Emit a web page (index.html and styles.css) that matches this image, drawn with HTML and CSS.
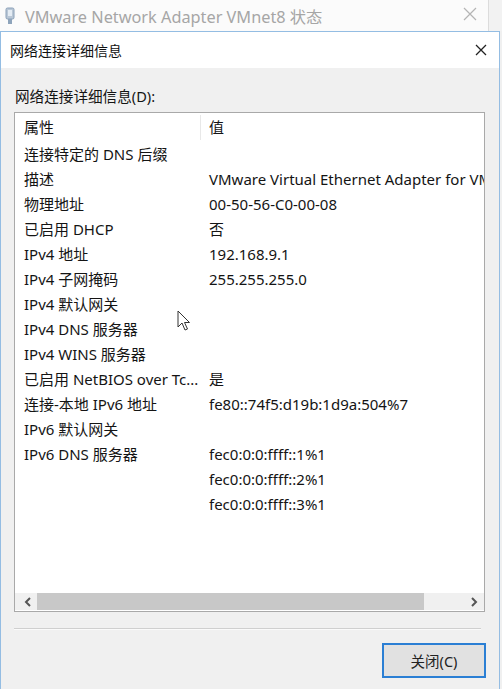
FILE: index.html
```html
<!DOCTYPE html>
<html lang="zh-CN">
<head>
<meta charset="utf-8">
<title>网络连接详细信息</title>
<link rel="stylesheet" href="styles.css">
</head>
<body>
<div class="bgbar">
  <div class="bgtitle">
    <svg class="bgicon" width="10" height="18" viewBox="0 0 10 18">
      <rect x="1" y="1" width="8" height="11" rx="1.5" fill="#b9c7d6" stroke="#8aa0b8" stroke-width="1"/>
      <rect x="3" y="3" width="4" height="6" fill="#e4ecf4"/>
      <rect x="3" y="12" width="4" height="5" fill="#8ea4bb"/>
    </svg>
    <span>VMware Network Adapter VMnet8 状态</span>
  </div>
  <svg class="bgclose" width="14" height="14" viewBox="0 0 14 14"><path d="M1 1L13 13M13 1L1 13" stroke="#b4b4b4" stroke-width="1.2" fill="none"/></svg>
  <div class="bgedge"></div>
</div>
<div class="dialog">
  <div class="titlebar">
    <span class="title">网络连接详细信息</span>
    <svg class="close" width="12" height="12" viewBox="0 0 12 12"><path d="M1 1L11 11M11 1L1 11" stroke="#222" stroke-width="1.3" fill="none"/></svg>
  </div>
  <div class="body">
    <div class="label">网络连接详细信息(D):</div>
    <div class="list">
      <div class="rows">
        <div class="row head"><span class="c1">属性</span><span class="c2">值</span></div>
        <div class="row"><span class="c1">连接特定的 DNS 后缀</span><span class="c2"></span></div>
        <div class="row"><span class="c1">描述</span><span class="c2">VMware Virtual Ethernet Adapter for VMnet8</span></div>
        <div class="row"><span class="c1">物理地址</span><span class="c2">00-50-56-C0-00-08</span></div>
        <div class="row"><span class="c1">已启用 DHCP</span><span class="c2">否</span></div>
        <div class="row"><span class="c1">IPv4 地址</span><span class="c2">192.168.9.1</span></div>
        <div class="row"><span class="c1">IPv4 子网掩码</span><span class="c2">255.255.255.0</span></div>
        <div class="row"><span class="c1">IPv4 默认网关</span><span class="c2"></span></div>
        <div class="row"><span class="c1">IPv4 DNS 服务器</span><span class="c2"></span></div>
        <div class="row"><span class="c1">IPv4 WINS 服务器</span><span class="c2"></span></div>
        <div class="row"><span class="c1">已启用 NetBIOS over Tc...</span><span class="c2">是</span></div>
        <div class="row"><span class="c1">连接-本地 IPv6 地址</span><span class="c2">fe80::74f5:d19b:1d9a:504%7</span></div>
        <div class="row"><span class="c1">IPv6 默认网关</span><span class="c2"></span></div>
        <div class="row"><span class="c1">IPv6 DNS 服务器</span><span class="c2">fec0:0:0:ffff::1%1</span></div>
        <div class="row"><span class="c1"></span><span class="c2">fec0:0:0:ffff::2%1</span></div>
        <div class="row"><span class="c1"></span><span class="c2">fec0:0:0:ffff::3%1</span></div>
      </div>
      <div class="hscroll">
        <svg class="arrow" width="8" height="10" viewBox="0 0 8 10"><path d="M6 1L2 5L6 9" stroke="#555" stroke-width="2" fill="none"/></svg>
        <div class="track"><div class="thumb"></div></div>
        <svg class="arrow" width="8" height="10" viewBox="0 0 8 10"><path d="M2 1L6 5L2 9" stroke="#555" stroke-width="2" fill="none"/></svg>
      </div>
    </div>
    <div class="sep"></div>
    <div class="actions">
      <button class="btn">关闭(C)</button>
    </div>
  </div>
  <svg class="cursor" width="14" height="22" viewBox="0 0 14 22">
    <path d="M1 1L1 17L5 13L8 20L10.5 19L7.5 12.5L12.5 12.5Z" fill="#fff" stroke="#333" stroke-width="1" stroke-linejoin="round"/>
  </svg>
</div>
</body>
</html>
```
FILE: styles.css
```css
html, body {
  margin: 0;
  padding: 0;
}
body {
  width: 502px;
  height: 689px;
  overflow: hidden;
  background: #f0f0f0;
  font-family: "Noto Sans", "Noto Sans CJK SC", sans-serif;
  color: #141414;
}
.bgbar {
  height: 31px;
  background: #fbfbfb;
  display: flex;
  align-items: center;
  position: relative;
}
.bgtitle {
  display: flex;
  align-items: center;
  gap: 10px;
  padding-left: 5px;
  flex: 1;
  color: #a6a6a6;
  font-size: 16.3px;
}
.bgicon {
  display: block;
  margin-top: 1px;
}
.bgclose {
  margin-right: 11px;
  margin-top: -4px;
}
.bgedge {
  width: 13px;
  align-self: stretch;
  border-left: 1px solid #dcdcdc;
  background: #f2f2f2;
}
.dialog {
  width: 498px;
  height: 657px;
  border: 1px solid #94bde3;
  border-bottom: none;
  position: relative;
  background: #f0f0f0;
  overflow: hidden;
}
.titlebar {
  height: 36px;
  background: #ffffff;
  display: flex;
  align-items: center;
  justify-content: space-between;
  padding: 0 12px 0 9px;
}
.title {
  font-size: 14px;
  color: #111;
}
.body {
  padding: 18px 13px 0 13px;
  background: #f0f0f0;
}
.label {
  font-size: 14.6px;
  line-height: 20px;
  height: 20px;
  padding-left: 1px;
}
.list {
  margin-top: 6px;
  width: 469px;
  height: 498px;
  border: 1px solid #a9a9a9;
  background: #ffffff;
  display: flex;
  flex-direction: column;
  overflow: hidden;
}
.rows {
  flex: 1;
  overflow: hidden;
}
.row {
  display: flex;
  height: 25px;
  line-height: 25px;
  font-size: 15px;
  white-space: nowrap;
}
.row.head {
  height: 29px;
  line-height: 29px;
}
.c1 {
  width: 177px;
  padding-left: 9px;
  flex: none;
  overflow: hidden;
}
.c2 {
  padding-left: 8px;
}
.head .c1 {
  border-right: 1px solid #e8e8e8;
  margin: 2px 0;
  line-height: 25px;
  width: 176px;
}
.head .c2 {
  line-height: 29px;
}
.hscroll {
  height: 17px;
  background: #f0f0f0;
  display: flex;
  align-items: center;
  margin-bottom: 1px;
}
.arrow {
  flex: none;
  margin: 0 5px 0 9px;
}
.hscroll .arrow:last-child {
  margin: 0 6px 0 4px;
}
.track {
  flex: 1;
  align-self: stretch;
  display: flex;
}
.thumb {
  width: 387px;
  background: #c8c8c8;
}
.sep {
  margin-top: 16px;
  width: 467px;
  border-top: 1px solid #cfcfcf;
  border-bottom: 1px solid #fafafa;
}
.actions {
  display: flex;
  justify-content: flex-end;
  margin-top: 13px;
}
.btn {
  width: 104px;
  height: 35px;
  border: 2px solid #2b7fd4;
  background: #e1e1e1;
  font-family: "Noto Sans", "Noto Sans CJK SC", sans-serif;
  font-size: 14.5px;
  color: #222;
  padding: 0;
}
.cursor {
  position: absolute;
  left: 176px;
  top: 278px;
}
```
